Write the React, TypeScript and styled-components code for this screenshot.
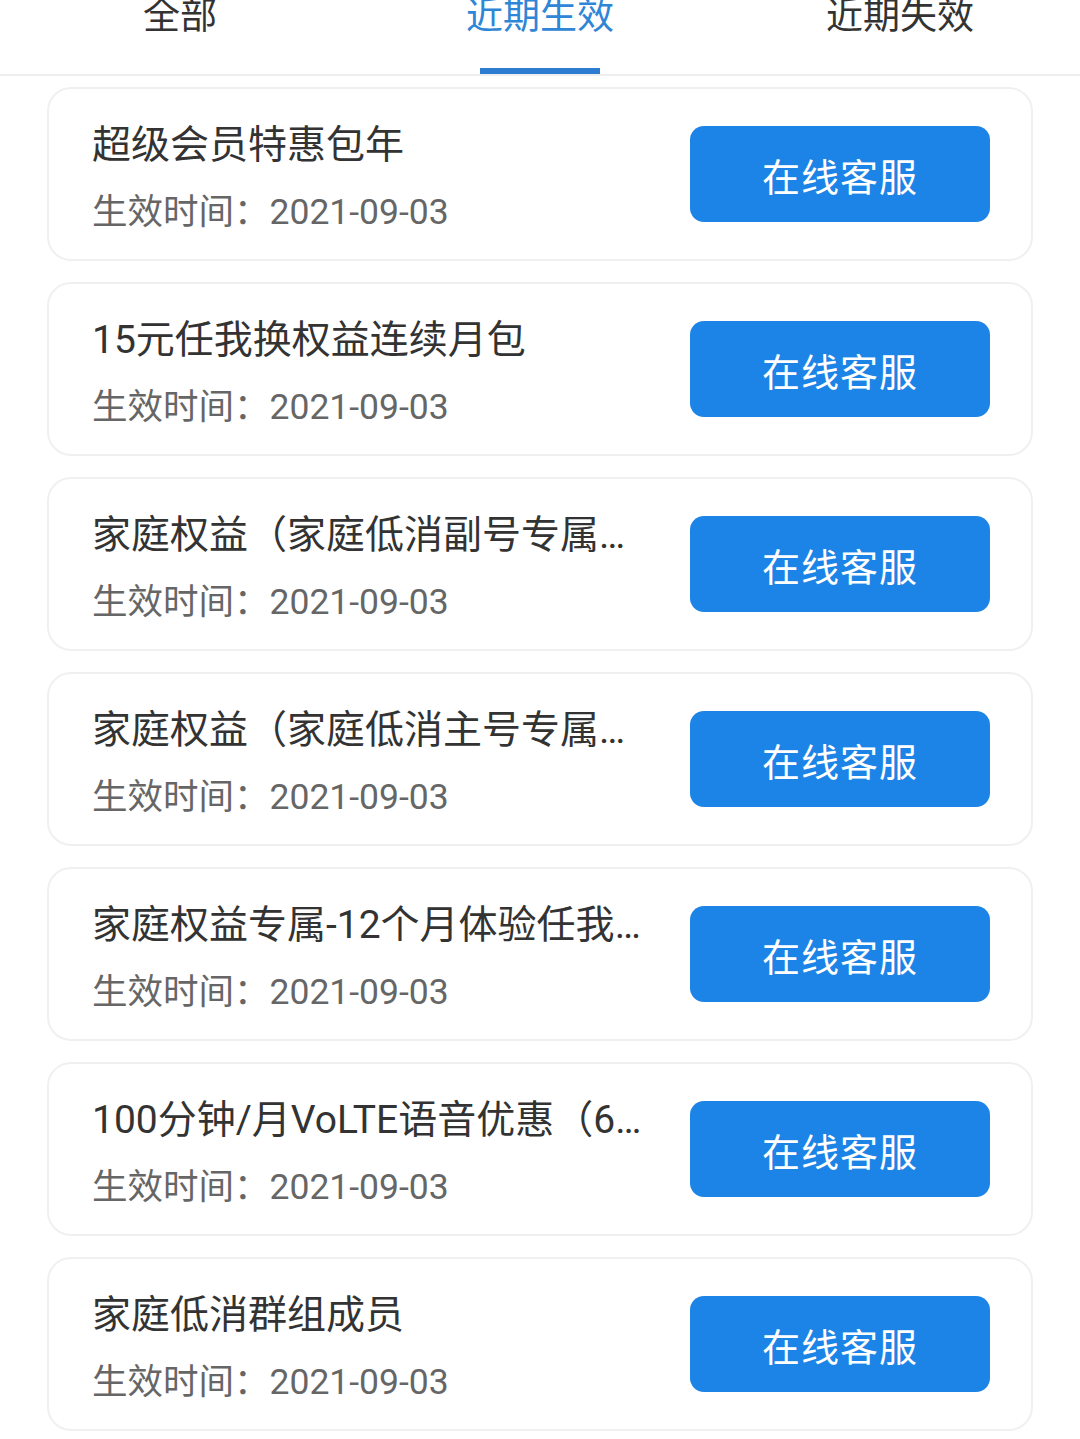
import React, { useState } from "react";
import styled, { createGlobalStyle } from "styled-components";

const GlobalStyle = createGlobalStyle`
  html, body {
    margin: 0;
    padding: 0;
    background: #ffffff;
  }
  body {
    font-family: Roboto, "Noto Sans CJK SC", sans-serif;
    -webkit-font-smoothing: antialiased;
  }
`;

const Page = styled.div`
  width: 1080px;
  height: 1439px;
  overflow: hidden;
  background: #ffffff;
`;

const TabBar = styled.div`
  display: grid;
  grid-template-columns: repeat(3, 1fr);
  height: 74px;
  border-bottom: 2px solid #eeeeee;
`;

const Tab = styled.div`
  display: flex;
  flex-direction: column;
  align-items: center;
  justify-content: space-between;
  cursor: pointer;
`;

const TabLabel = styled.span<{ $active?: boolean }>`
  font-size: 37px;
  line-height: 37px;
  margin-top: -2px;
  color: ${(p) => (p.$active ? "#2f86d6" : "#333333")};
`;

const TabLine = styled.span<{ $active?: boolean }>`
  width: 120px;
  height: 6px;
  background: ${(p) => (p.$active ? "#2c7dd2" : "transparent")};
`;

const List = styled.div`
  display: flex;
  flex-direction: column;
  gap: 21px;
  padding: 11px 47px 0 47px;
`;

const Card = styled.div`
  display: flex;
  align-items: center;
  justify-content: space-between;
  height: 174px;
  box-sizing: border-box;
  padding: 0 41px 0 43px;
  border: 2px solid #f0f0f0;
  border-radius: 24px;
  background: #ffffff;
`;

const Info = styled.div`
  display: flex;
  flex-direction: column;
  gap: 19px;
  width: 550px;
  padding-top: 8px;
  min-width: 0;
`;

const Title = styled.div`
  font-size: 39px;
  line-height: 48px;
  color: #333333;
  white-space: nowrap;
  overflow: hidden;
  text-overflow: ellipsis;
`;

const DateLine = styled.div`
  font-size: 35.5px;
  line-height: 48px;
  color: #666666;
  white-space: nowrap;
`;

const ServiceButton = styled.button`
  flex: none;
  width: 300px;
  height: 96px;
  border: none;
  border-radius: 14px;
  background: #1b84e6;
  color: #ffffff;
  font-family: inherit;
  font-size: 38px;
  letter-spacing: 1px;
  cursor: pointer;
`;

const tabs = ["全部", "近期生效", "近期失效"];

const items = [
  "超级会员特惠包年",
  "15元任我换权益连续月包",
  "家庭权益（家庭低消副号专属包）",
  "家庭权益（家庭低消主号专属包）",
  "家庭权益专属-12个月体验任我换",
  "100分钟/月VoLTE语音优惠（6个月）",
  "家庭低消群组成员",
];

export default function App() {
  const [active, setActive] = useState(1);

  return (
    <Page>
      <GlobalStyle />
      <TabBar>
        {tabs.map((t, i) => (
          <Tab key={t} onClick={() => setActive(i)}>
            <TabLabel $active={i === active}>{t}</TabLabel>
            <TabLine $active={i === active} />
          </Tab>
        ))}
      </TabBar>
      <List>
        {items.map((name) => (
          <Card key={name}>
            <Info>
              <Title>{name}</Title>
              <DateLine>生效时间：2021-09-03</DateLine>
            </Info>
            <ServiceButton>在线客服</ServiceButton>
          </Card>
        ))}
      </List>
    </Page>
  );
}
